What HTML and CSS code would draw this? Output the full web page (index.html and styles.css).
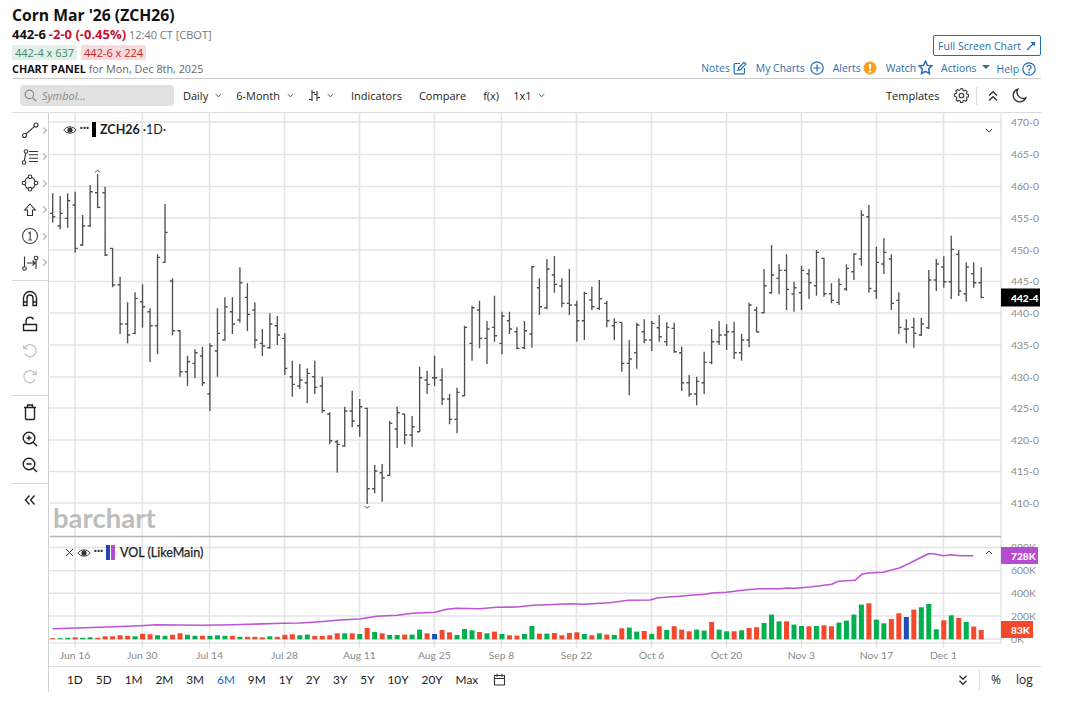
FILE: index.html
```html
<!DOCTYPE html>
<html lang="en">
<head>
<meta charset="utf-8">
<title>Corn Mar '26 (ZCH26)</title>
<link rel="stylesheet" href="styles.css">
</head>
<body>
<div class="page">
  <header class="head">
    <div class="head-left">
      <h1 class="title">Corn Mar '26 (ZCH26)</h1>
      <div class="quote"><b class="last">442-6</b> <b class="chg">-2-0 (-0.45%)</b> <span class="time">12:40 CT [CBOT]</span></div>
      <div class="badges"><span class="badge bid">442-4 x 637</span><span class="badge ask">442-6 x 224</span></div>
      <div class="panel"><b>CHART PANEL</b> for Mon, Dec 8th, 2025</div>
    </div>
    <div class="head-right">
      <a class="fullscreen">Full Screen Chart
        <svg class="ic10" viewBox="0 0 10 10"><path d="M1 9 7.500 2.500" class="blue-s"/><path d="M4.500 1H9V5.500Z" fill="#1f6fb5"/></svg>
      </a>
      <nav class="actions">
        <a class="act">Notes <svg class="ic14" viewBox="0 0 14 14"><path d="M7 2.500H2.200a1 1 0 0 0-1 1v8.300a1 1 0 0 0 1 1h8.300a1 1 0 0 0 1-1V7" class="blue-s"/><path d="M5.500 6.800 11 1.300l1.800 1.800-5.500 5.500-2.300.5Z" class="blue-s"/></svg></a>
        <a class="act act-charts">My Charts <svg class="ic14" viewBox="0 0 14 14"><circle cx="7" cy="7" r="6.200" class="blue-s"/><path d="M7 3.500v7M3.500 7h7" class="blue-s"/></svg></a>
        <a class="act act-alerts">Alerts<svg class="ic14" viewBox="0 0 14 14"><circle cx="7" cy="7" r="6.500" fill="#f9a11b"/><path d="M7 3v5" stroke="#fff" stroke-width="2.200" fill="none"/><circle cx="7" cy="10.400" r="1.200" fill="#fff"/></svg></a>
        <a class="act act-watch">Watch<svg class="ic15" viewBox="0 0 15 15"><path d="M7.500 1.200 9.400 5.400l4.600.5-3.400 3.100.9 4.600-4-2.300-4 2.300.9-4.600L1 5.900l4.600-.5Z" class="blue-s blue-w"/></svg></a>
        <a class="act act-actions">Actions <i class="tri"></i></a>
        <a class="act act-help">Help<svg class="ic14" viewBox="0 0 14 14"><circle cx="7" cy="7" r="6.200" class="blue-s"/><path d="M5 5.400C5 4 6 3.400 7 3.400S9.100 4 9.100 5.300C9.100 6.700 7 6.700 7 8.400" class="blue-s"/><circle cx="7" cy="10.400" r=".9" fill="#1f6fb5"/></svg></a>
      </nav>
    </div>
  </header>

  <div class="toolbar">
    <div class="search">
      <svg class="ic13" viewBox="0 0 13 13"><circle cx="5.400" cy="5.400" r="4.200" class="grey-s"/><path d="m8.500 8.500 3.800 3.800" class="grey-s"/></svg>
      <span>Symbol...</span>
    </div>
    <button class="tb tb-daily">Daily<svg class="caret" viewBox="0 0 8 5"><path d="m1 1 3 3 3-3"/></svg></button>
    <button class="tb tb-range">6-Month<svg class="caret" viewBox="0 0 8 5"><path d="m1 1 3 3 3-3"/></svg></button>
    <button class="tb tb-type"><svg class="ic13" viewBox="0 0 13 13"><path d="M4 1v11M1 10.500h3M4 3.500h3M9 2v10M6 5.500h3M9 8.500h3" class="dark-s"/></svg><svg class="caret" viewBox="0 0 8 5"><path d="m1 1 3 3 3-3"/></svg></button>
    <button class="tb tb-ind">Indicators</button>
    <button class="tb tb-cmp">Compare</button>
    <button class="tb tb-fx">f(x)</button>
    <button class="tb tb-grid">1x1<svg class="caret" viewBox="0 0 8 5"><path d="m1 1 3 3 3-3"/></svg></button>
    <div class="tb-right">
      <button class="tb tb-tpl">Templates</button>
      <svg class="ic15 gear" viewBox="0 0 15 15"><path d="M6.300 1h2.400l.3 1.800 1.200.5 1.500-1 1.700 1.700-1 1.500.5 1.200 1.800.3v2.400l-1.800.3-.5 1.200 1 1.500-1.700 1.700-1.500-1-1.200.5-.3 1.800H6.300l-.3-1.800-1.200-.5-1.500 1-1.700-1.700 1-1.500-.5-1.200L0 8.700V6.300l1.800-.3.500-1.200-1-1.500L3 1.600l1.500 1 1.200-.5Z" class="dark-s" transform="translate(.5 -.1) scale(.95)"/><circle cx="7.500" cy="7.500" r="2.300" class="dark-s"/></svg>
      <span class="tb-sep"></span>
      <svg class="ic12 dbl" viewBox="0 0 12 12"><path d="M2 5.500 6 1.800l4 3.700M2 10.500 6 6.800l4 3.700" class="dark-s dark-w"/></svg>
      <svg class="ic15 moon" viewBox="0 0 15 15"><path d="M5.800 1.200a6.500 6.500 0 1 0 8 8.600A6.200 6.200 0 0 1 5.800 1.200Z" class="dark-s dark-w"/></svg>
    </div>
  </div>

  <div class="work">
    <aside class="tools">
      <div class="tool"><svg class="ti" viewBox="0 0 20 20"><circle cx="4.500" cy="15.500" r="2"/><circle cx="16" cy="5" r="2"/><path d="M6 14 14.500 6.400"/></svg><i class="more"></i></div>
      <div class="tool"><svg class="ti" viewBox="0 0 20 20"><circle cx="6" cy="4.500" r="1.800"/><circle cx="4" cy="15.500" r="1.800"/><path d="M5.700 6.300 4.300 13.700M9 4.500h9M9 7.800h9M9 11.200h9M9 14.500h9"/></svg><i class="more"></i></div>
      <div class="tool"><svg class="ti" viewBox="0 0 20 20"><path d="M4.800 8.300C5.500 6 7 4.700 8.400 4.300M11.600 4.300C13 4.700 14.500 6 15.200 8.300M15.200 11.700C14.500 14 13 15.300 11.600 15.700M8.400 15.700C7 15.300 5.500 14 4.800 11.700"/><circle cx="10" cy="3.800" r="1.800"/><circle cx="16" cy="10" r="1.800"/><circle cx="10" cy="16.200" r="1.800"/><circle cx="4" cy="10" r="1.800"/></svg><i class="more"></i></div>
      <div class="tool"><svg class="ti" viewBox="0 0 20 20"><path d="M10 4 15.300 10H12.500V15.500H7.500V10H4.700Z"/></svg><i class="more"></i></div>
      <div class="tool"><svg class="ti ti-grey" viewBox="0 0 20 20"><circle cx="10" cy="10" r="7.500"/><path d="M8.300 7.500 10.200 6.200V14M8.300 14h3.600"/></svg><i class="more"></i></div>
      <div class="tool"><svg class="ti" viewBox="0 0 20 20"><path d="M4.500 3.500v10.200M7 10h8M12.500 7.500 15 10l-2.500 2.500M16 6.800V16"/><circle cx="4.500" cy="15.500" r="1.800"/><circle cx="16" cy="5" r="1.800"/></svg><i class="more"></i></div>
      <hr class="tool-sep">
      <div class="tool"><svg class="ti ti-bold" viewBox="0 0 20 20"><path d="M3.500 17.500V10a6.500 6.500 0 0 1 13 0v7.500H13V10a3 3 0 0 0-6 0v7.500ZM3.500 14H7M13 14h3.500"/></svg></div>
      <div class="tool"><svg class="ti ti-bold" viewBox="0 0 20 20"><path d="M3.500 10.500h13v6h-13ZM6 10.500V7.200a4 4 0 0 1 7.500-1.800"/></svg></div>
      <div class="tool"><svg class="ti ti-off" viewBox="0 0 20 20"><path d="M4.800 12.500A6 6 0 1 0 5.400 6L3.800 7.600M3.800 3.800v3.800h3.800"/></svg></div>
      <div class="tool"><svg class="ti ti-off" viewBox="0 0 20 20"><path d="M15.200 12.500A6 6 0 1 1 14.600 6l1.600 1.600M16.200 3.800v3.800h-3.800"/></svg></div>
      <hr class="tool-sep">
      <div class="tool"><svg class="ti ti-bold" viewBox="0 0 20 20"><path d="M5.500 6v10.500a1 1 0 0 0 1 1h7a1 1 0 0 0 1-1V6M4 5.500h12M7.500 5.500V3h5v2.500"/></svg></div>
      <div class="tool"><svg class="ti ti-bold" viewBox="0 0 20 20"><circle cx="9" cy="9" r="5.800"/><path d="M13.200 13.200 17 17M9 6.500v5M6.500 9h5"/></svg></div>
      <div class="tool"><svg class="ti ti-bold" viewBox="0 0 20 20"><circle cx="9" cy="9" r="5.800"/><path d="M13.200 13.200 17 17M6.500 9h5"/></svg></div>
      <hr class="tool-sep">
      <div class="tool"><svg class="ti ti-bold" viewBox="0 0 20 20"><path d="M9.500 5.500 5.500 10l4 4.500M14.500 5.500l-4 4.500 4 4.500"/></svg></div>
    </aside>

    <main class="main">
      <div class="chart">
        <svg id="plot" class="plot" viewBox="49 113 992 553" width="992" height="553"></svg>
        <div class="legend legend-main">
          <svg class="eye" viewBox="0 0 14 10"><path d="M.8 5C4 .8 10 .8 13.200 5 10 9.200 4 9.200.8 5Z"/><circle cx="7" cy="5" r="2.600"/></svg>
          <span class="dots">···</span>
          <i class="swatch swatch-black"></i>
          <span class="legend-text">ZCH26 <em>·1D·</em></span>
        </div>
        <svg class="fold fold-main" viewBox="0 0 8 5"><path d="m1 1 3 3 3-3"/></svg>
        <div class="legend legend-vol">
          <svg class="close" viewBox="0 0 9 9"><path d="m1 1 7 7M8 1 1 8"/></svg>
          <svg class="eye" viewBox="0 0 14 10"><path d="M.8 5C4 .8 10 .8 13.200 5 10 9.200 4 9.200.8 5Z"/><circle cx="7" cy="5" r="2.600"/></svg>
          <span class="dots">···</span>
          <i class="swatch swatch-blue"></i><i class="swatch swatch-purple"></i>
          <span class="legend-text vol-text">VOL (LikeMain)</span>
        </div>
        <svg class="fold fold-vol" viewBox="0 0 8 5"><path d="m1 4 3-3 3 3"/></svg>
      </div>
      <div class="ranges">
        <a>1D</a><a>5D</a><a>1M</a><a>2M</a><a>3M</a><a class="on">6M</a><a>9M</a><a>1Y</a><a>2Y</a><a>3Y</a><a>5Y</a><a>10Y</a><a>20Y</a><a>Max</a>
        <svg class="ic13 cal" viewBox="0 0 13 13"><path d="M1.500 2.500h10v9.500h-10ZM1.500 5.500h10M4 .8v3M9 .8v3" class="dark-s"/></svg>
        <div class="ranges-right">
          <svg class="ic12" viewBox="0 0 12 12"><path d="m2.500 1.800 3.500 3.400 3.500-3.400M2.500 6.800l3.500 3.400 3.500-3.400" class="dark-s dark-w"/></svg>
          <span class="rsep"></span>
          <a>%</a><a>log</a>
        </div>
      </div>
    </main>
  </div>
</div>
<script src="chart.js"></script>
</body>
</html>
```

FILE: styles.css
```css
* { box-sizing: border-box; }
html, body { margin: 0; padding: 0; background: #fff; }
body { font-family: "Open Sans", "Liberation Sans", sans-serif; color: #222; }
a { color: inherit; text-decoration: none; }
.page { width: 1029px; margin-left: 12px; }

.head { display: flex; justify-content: space-between; height: 79px; border-bottom: 1px solid #ccc; }
.head-left { padding-top: 5px; }
.title { margin: 0; font-size: 15.7px; line-height: 21px; font-weight: 700; color: #111; }
.quote { font-size: 11px; line-height: 17px; color: #777; }
.quote .last { color: #111; font-size: 13px; }
.quote .chg { color: #c8102e; font-size: 13px; }
.badges { display: flex; gap: 4px; margin-top: 2px; }
.badge { font-size: 11px; line-height: 15px; height: 15px; padding: 0 3px; border-radius: 2px; }
.bid { background: #e3f0e9; color: #3f8a6c; }
.ask { background: #f8dada; color: #c4262c; }
.panel { font-size: 10.8px; line-height: 16px; margin-top: 1px; color: #666; }
.panel b { color: #111; }

.head-right { display: flex; flex-direction: column; align-items: flex-end; padding-top: 35px; }
.fullscreen { display: flex; align-items: center; justify-content: center; gap: 5px; width: 108px; height: 21px; border: 1px solid #1f6fb5; border-radius: 2px; font-size: 10.5px; color: #2f6ea5; }
.actions { display: flex; align-items: center; margin-top: 3px; padding-right: 5px; font-size: 10.4px; color: #2f6ea5; height: 17px; }
.act { display: flex; align-items: center; gap: 3px; }
.act-charts { margin-left: 9px; gap: 5px; }
.act-alerts { margin-left: 9px; gap: 2px; }
.act-watch { margin-left: 9px; gap: 2px; }
.act-actions { margin-left: 8px; gap: 5px; }
.act-help { margin-left: 7px; gap: 3px; padding-top: 2px; }
.tri { width: 0; height: 0; border-left: 4px solid transparent; border-right: 4px solid transparent; border-top: 4px solid #2f6ea5; margin-top: -2px; }

.ic10 { width: 10px; height: 10px; flex: none; }
.ic12 { width: 12px; height: 12px; flex: none; }
.ic13 { width: 13px; height: 13px; flex: none; }
.ic14 { width: 14px; height: 14px; flex: none; }
.ic15 { width: 15px; height: 15px; flex: none; }
.blue-s { fill: none; stroke: #1f6fb5; stroke-width: 1.2; }
.blue-w { stroke-width: 1.5; }
.grey-s { fill: none; stroke: #888; stroke-width: 1.2; }
.dark-s { fill: none; stroke: #333; stroke-width: 1.1; }
.dark-w { stroke-width: 1.4; }

.toolbar { display: flex; align-items: center; height: 34px; border-bottom: 1px solid #ddd; padding-left: 8px; font-size: 11px; }
.search { display: flex; align-items: center; gap: 5px; width: 154px; height: 21px; padding-left: 4px; background: #e1e1e1; border-radius: 4px; color: #888; font-style: italic; }
.tb { display: flex; align-items: center; gap: 7px; padding: 0; border: 0; background: none; font: inherit; color: #222; }
.caret { width: 7px; height: 5px; fill: none; stroke: #333; stroke-width: 1; flex: none; }
.tb-daily { margin-left: 9px; }
.tb-range { margin-left: 14px; }
.tb-type { margin-left: 14px; gap: 6px; }
.tb-ind { margin-left: 17px; }
.tb-cmp { margin-left: 17px; }
.tb-fx { margin-left: 17px; }
.tb-grid { margin-left: 14px; }
.tb-right { display: flex; align-items: center; margin-left: auto; width: 155px; }
.gear { margin-left: 15px; }
.tb-sep { width: 1px; height: 18px; background: #ddd; margin: 0 10px 0 7px; }
.moon { margin-left: 13px; }

.work { display: flex; }
.tools { width: 37px; height: 579px; padding-top: 4px; border-right: 1px solid #d0d0d0; flex: none; }
.tool { display: flex; align-items: center; height: 26.5px; padding-left: 8px; position: relative; }
.ti { width: 20px; height: 20px; fill: none; stroke: #333; stroke-width: 1.1; flex: none; }
.ti-grey { stroke: #444; }
.ti-bold { stroke: #222; stroke-width: 1.4; }
.ti-off { stroke: #c4c4c4; stroke-width: 1.3; }
.more { display: block; width: 5px; height: 5px; border-top: 1px solid #aaa; border-right: 1px solid #aaa; transform: rotate(45deg); margin-left: 1px; }
.tool-sep { margin: 4px 0 3.5px; border: 0; border-top: 1px solid #d8d8d8; height: 0; }

.main { flex: none; width: 992px; }
.chart { position: relative; height: 553px; }
.plot { display: block; }
.plot text { font-family: "Lato", sans-serif; font-size: 10.4px; fill: #8a8a8a; }
.plot .tag-text { fill: #fff; font-weight: 900; font-size: 10.2px; }
.plot .logo { font-family: "Lato", sans-serif; font-size: 27.5px; font-weight: 700; fill: #bdbdbd; }
.grid { stroke: #e4e4e4; stroke-width: 1.5; }
.axis { stroke: #d8d8d8; stroke-width: 1; }
.pane-sep { stroke: #b5b5b5; stroke-width: 1.5; }
.ohlc { stroke: #505050; stroke-width: 1.35; fill: none; }
.ext { stroke: #444; stroke-width: .9; fill: none; }
.ma { stroke: #c052d8; stroke-width: 1.6; fill: none; stroke-linejoin: round; }
.vol-up { fill: #00b04f; }
.vol-down { fill: #f4472b; }
.vol-flat { fill: #1f4db5; }
.tag-black { fill: #000; }
.tag-purple { fill: #b84cd0; }
.tag-red { fill: #f4472b; }

.legend { position: absolute; display: flex; align-items: center; font-family: "Lato", sans-serif; font-size: 12.5px; color: #222; }
.legend-main { left: 14px; top: 9px; height: 15px; }
.legend-vol { left: 16px; top: 432px; height: 15px; }
.eye { width: 14px; height: 10px; flex: none; }
.eye path { fill: none; stroke: #333; stroke-width: 1; }
.eye circle { fill: #333; }
.dots { width: 13px; text-align: center; margin-left: 1px; font-weight: 900; line-height: 1; position: relative; top: -3px; font-size: 11px; color: #333; }
.close { width: 9px; height: 9px; fill: none; stroke: #333; stroke-width: 1; margin-right: 3px; flex: none; }
.swatch { display: block; width: 4px; height: 15px; }
.swatch-black { background: #000; margin-left: 1px; margin-right: 4px; }
.swatch-blue { background: #2146b8; margin-left: 1px; margin-right: 1px; }
.swatch-purple { background: #b84cd0; margin-right: 5px; }
.legend-text { font-weight: 700; }
.legend-text em { font-style: normal; font-weight: 400; }
.vol-text { font-weight: 400; -webkit-text-stroke: .25px #222; }
.fold { position: absolute; width: 8px; height: 5px; fill: none; stroke: #444; stroke-width: 1; }
.fold-main { left: 936px; top: 15px; }
.fold-vol { left: 936px; top: 437px; }

.ranges { display: flex; align-items: center; height: 26px; border-top: 1px solid #ddd; font-family: "Lato", sans-serif; font-size: 11.8px; color: #222; padding-left: 18px; gap: 13px; }
.ranges .on { color: #0a6ebd; }
.cal { margin-left: 2px; }
.ranges-right { display: flex; align-items: center; margin-left: auto; font-family: "Open Sans", sans-serif; font-size: 12px; width: 84px; height: 100%; }
.rsep { width: 1px; height: 22px; background: #ddd; margin: 0 11px 0 10px; }
.ranges-right a + a { margin-left: 15px; }
```

FILE: chart.js
```js
var NS = "http://www.w3.org/2000/svg";
var plot = document.getElementById("plot");

function el(tag, attrs, text) {
  var n = document.createElementNS(NS, tag);
  for (var k in attrs) n.setAttribute(k, attrs[k]);
  if (text) n.textContent = text;
  plot.appendChild(n);
  return n;
}

var FIRST_X = 52.7, PITCH = 7.488, PLOT_RIGHT = 1001, LABEL_X = 1011;
function barX(i) { return FIRST_X + PITCH * i; }

/* horizontal price and volume levels */
var prices = [["470-0",122],["465-0",154.5],["460-0",186.5],["455-0",218],["450-0",250],["445-0",281.5],["440-0",313],["435-0",345],["430-0",377],["425-0",408],["420-0",440],["415-0",471.5],["410-0",503]];
var vols = [["800K",547.5],["600K",570.7],["400K",593.3],["200K",616],["0K",639]];
var dates = [["Jun 16",75],["Jun 30",142.2],["Jul 14",209.5],["Jul 28",284.5],["Aug 11",359.5],["Aug 25",434.3],["Sep 8",501.5],["Sep 22",576.5],["Oct 6",651.5],["Oct 20",726.5],["Nov 3",801.5],["Nov 17",876.5],["Dec 1",943.5]];

prices.concat(vols).forEach(function (p) {
  el("line", { x1: 49, x2: PLOT_RIGHT, y1: p[1], y2: p[1], "class": "grid" });
});
dates.forEach(function (d) {
  el("line", { x1: d[1], x2: d[1], y1: 113, y2: 648, "class": "grid" });
  el("text", { x: d[1], y: 659, "text-anchor": "middle" }, d[0]);
});
el("line", { x1: 49, x2: PLOT_RIGHT, y1: 643, y2: 643, "class": "axis" });
el("line", { x1: PLOT_RIGHT, x2: PLOT_RIGHT, y1: 113, y2: 643, "class": "axis" });
el("line", { x1: 50, x2: PLOT_RIGHT, y1: 536.5, y2: 536.5, "class": "pane-sep" });

prices.concat(vols).forEach(function (p) {
  el("text", { x: LABEL_X, y: p[1] + 3.5 }, p[0]);
});

el("text", { x: 53, y: 528, "class": "logo" }, "barchart");

/* OHLC: [high, low, open, close], measured in rows of 1/3 px from a section origin */
var sections = [
  { y: 160, bars: [[100,188,160,170],[108,208,198,160],[100,203,175,122],[95,278,135,265],[165,258,255,198],[75,200,198,95],[42,145,98,142],[80,288,98,285],[264,382,265,375],[350,522,374,492],[427,550,492,525],[397,523,520,415],[373,503,425,440],[445,606,455,497],[283,583,497,292],[132,308,307,217],[355,526,363,512],[510,650,512,635],[587,678,635,605],[568,655,610,578],[560,678,588,668],[550,753,702,558],[445,650,573,520],[412,542,540,440],[412,522,455,492],[322,488,480,368],[370,513,412,463],[427,565,450,540],[507,588,550,558],[460,566,563,492],[468,555,497,525],[520,645,535,625]] },
  { y: 250, bars: [[332,440,380,403],[342,417,408,390],[355,460,398,370],[332,432,380,412],[380,488,408,482],[487,583,492,572],[570,668,575,583],[470,590,588,483],[422,532,483,513],[447,560,527,470],[473,762,475,716],[645,730,716,663],[642,755,668,683],[513,678,676,520],[470,594,537,488],[492,583,492,555],[498,590,555,530],[350,546,545,383],[362,432,390,403],[317,408,383,383],[355,465,390,447],[432,523,447,508],[413,550,508,427],[228,438,437,232],[167,332,280,173],[152,295,180,265],[213,342,265,237],[137,275,232,257],[185,313,280,198],[185,252,212,237],[232,298,245,295]] },
  { y: 240, bars: [[243,328,323,272],[78,323,282,80],[115,225,143,200],[57,208,203,87],[48,158,105,133],[115,202,138,190],[87,225,190,195],[182,305,195,242],[155,300,242,160],[140,210,180,200],[120,210,205,176],[182,262,190,242],[235,300,257,247],[247,395,247,370],[300,466,370,357],[248,386,338,255],[238,310,275,300],[243,333,300,250],[225,305,263,290],[247,318,305,262],[248,338,265,335],[320,453,338,428],[405,470,428,462],[410,496,462,424],[335,462,428,367],[267,373,367,305],[243,315,305,285],[253,330,285,275],[245,357,275,338],[281,362,338,300],[188,322,300,195]] },
  { y: 195, bars: [[335,412,345,411],[222,355,353,272],[150,296,293,240],[208,297,250,226],[178,345,226,283],[260,350,297,278],[212,345,293,226],[222,312,236,263],[165,302,272,172],[188,305,190,296],[265,325,296,316],[250,330,322,268],[208,288,282,220],[175,255,230,177],[46,212,192,60],[30,293,65,280],[155,312,288,202],[130,237,207,172],[178,345,192,325],[292,417,316,397],[373,445,402,402],[368,458,397,415],[368,423,420,387],[225,402,398,255],[192,288,255,207],[184,278,216,260],[122,312,260,163],[165,303,178,288],[202,320,296,216],[202,278,236,263],[217,310,263,307]] }
];

var index = 0, d = "";
sections.forEach(function (s) {
  s.bars.forEach(function (b) {
    var x = barX(index).toFixed(2);
    var yv = function (v) { return (s.y + v / 3).toFixed(1); };
    d += "M" + x + " " + yv(b[0]) + "V" + yv(b[1]);
    d += "M" + (barX(index) - 2.6).toFixed(2) + " " + yv(b[2]) + "H" + x;
    d += "M" + x + " " + yv(b[3]) + "H" + (barX(index) + 2.6).toFixed(2);
    index++;
  });
});
el("path", { d: d, "class": "ohlc" });
el("path", { d: "M95 172.500Q97.500 168.500 100 172.500M364.500 506Q367 510 369.500 506", "class": "ext" });

/* volume: [kind, height px] — u up, d down, f unchanged */
var volume = "d1 u1 u1.5 d2 u1.5 u2 d1.5 d3 d3 d4 d3.5 u3 d5.5 d5 u4 u3.5 d4.5 d6 u4.5 u3.5 d3.5 u3.5 u4 u3.5 d3.5 u2.5 d2.5 d2.5 d2 u3 d2.5 d4.5 d5 u4 u4.7 d3.3 d3.3 d4 d6 u6 d6 u5.3 d11.3 u7.3 d6 u4.3 u4.3 d4.7 u4.7 u9.7 d6 f5.3 d9.3 d7 u4.3 u10.3 u9 d7.3 u6 d7.7 u5.3 d4 d3.7 u5.3 u13.3 d5.7 u5.7 d6.3 d4 d6.3 d7 u5.3 d4 u6 d4.7 u4.3 d11 u11.7 u7.7 d8.3 u5.3 d13 u9.3 d13 d9.7 d8 u9.7 u8.7 d17.3 u9.7 u8 d8 u9 d11.3 d12 u16.3 u24.7 u18 d18 u14.7 u13.3 d13 u13.3 d14 d13 u16.7 u18.7 u24.7 u34.7 d36 u19.7 u16 d20.3 d26 f22.3 d29.7 u32 u35.3 u10 d19 u24 d21.3 u17.3 d12.7 d9.3".split(" ");
var BASE = 639.3, kinds = { u: "vol-up", d: "vol-down", f: "vol-flat" };
volume.forEach(function (v, i) {
  var h = parseFloat(v.slice(1));
  el("rect", { x: (barX(i) - 2.5).toFixed(2), y: (BASE - h).toFixed(1), width: 5, height: h, "class": kinds[v[0]] });
});

var maLine = [[52.7,628.7],[100,627.3],[140,625.7],[157,624.7],[200,625.3],[233,624.7],[283,623.3],[300,623],[320,621.7],[340,620],[360,619],[376.7,616.3],[396.7,615.3],[413,613.3],[435,612.3],[446.7,609.3],[456.7,608.3],[480,608.7],[496.7,607.3],[516.7,607],[533,605.3],[546.7,604.7],[570,603.7],[583,604.3],[610,602.7],[628,600.3],[650,600],[658,597.7],[680,596.2],[690,595.3],[705,594.3],[711.7,593],[726.7,592.3],[746.7,589.7],[760,588.7],[780,588.7],[786.7,588],[795,588.3],[810,587],[820,585.7],[831.7,584.3],[838.3,581.3],[855,580.3],[861.7,574.3],[868.3,573],[883.3,572.3],[900,567.7],[910,563],[928.3,553.7],[933.3,553.7],[943.3,555.7],[951.7,554.7],[960,555.7],[973.3,555.7]];
el("polyline", { points: maLine.map(function (p) { return p.join(","); }).join(" "), "class": "ma" });

/* last-value tags on the axis */
[[288.5, 18, 39, "tag-black", "442-4"], [547, 17, 37, "tag-purple", "728K"], [621, 17, 32, "tag-red", "83K"]].forEach(function (t) {
  el("rect", { x: PLOT_RIGHT, y: t[0], width: t[2], height: t[1], "class": t[3] });
  el("text", { x: LABEL_X, y: t[0] + t[1] / 2 + 4, "class": "tag-text" }, t[4]);
});
```
